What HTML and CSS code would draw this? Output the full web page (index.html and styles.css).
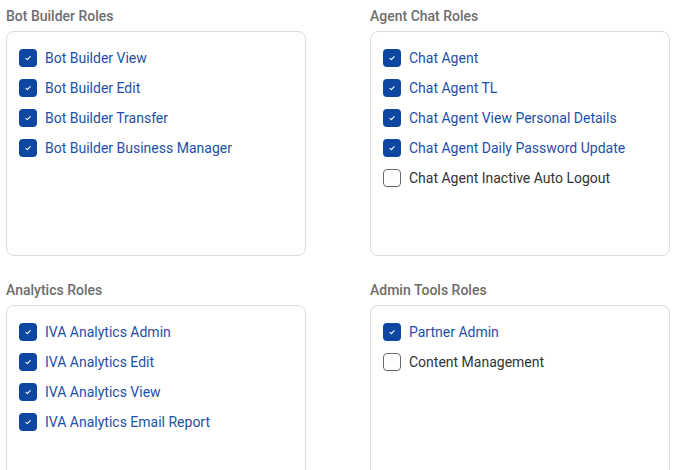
FILE: index.html
```html
<!DOCTYPE html>
<html>
<head>
<meta charset="utf-8">
<link rel="stylesheet" href="styles.css">
</head>
<body>
<div class="grid">
  <section class="group">
    <h3 class="title">Bot Builder Roles</h3>
    <div class="box">
      <label class="row on"><span class="cb"><svg viewBox="0 0 18 18"><path d="M7 9.3l1.4 1.3 2.8-3"/></svg></span>Bot Builder View</label>
      <label class="row on"><span class="cb"><svg viewBox="0 0 18 18"><path d="M7 9.3l1.4 1.3 2.8-3"/></svg></span>Bot Builder Edit</label>
      <label class="row on"><span class="cb"><svg viewBox="0 0 18 18"><path d="M7 9.3l1.4 1.3 2.8-3"/></svg></span>Bot Builder Transfer</label>
      <label class="row on"><span class="cb"><svg viewBox="0 0 18 18"><path d="M7 9.3l1.4 1.3 2.8-3"/></svg></span>Bot Builder Business Manager</label>
    </div>
  </section>
  <section class="group">
    <h3 class="title">Agent Chat Roles</h3>
    <div class="box">
      <label class="row on"><span class="cb"><svg viewBox="0 0 18 18"><path d="M7 9.3l1.4 1.3 2.8-3"/></svg></span>Chat Agent</label>
      <label class="row on"><span class="cb"><svg viewBox="0 0 18 18"><path d="M7 9.3l1.4 1.3 2.8-3"/></svg></span>Chat Agent TL</label>
      <label class="row on"><span class="cb"><svg viewBox="0 0 18 18"><path d="M7 9.3l1.4 1.3 2.8-3"/></svg></span>Chat Agent View Personal Details</label>
      <label class="row on"><span class="cb"><svg viewBox="0 0 18 18"><path d="M7 9.3l1.4 1.3 2.8-3"/></svg></span>Chat Agent Daily Password Update</label>
      <label class="row off"><span class="cb"></span>Chat Agent Inactive Auto Logout</label>
    </div>
  </section>
  <section class="group">
    <h3 class="title">Analytics Roles</h3>
    <div class="box">
      <label class="row on"><span class="cb"><svg viewBox="0 0 18 18"><path d="M7 9.3l1.4 1.3 2.8-3"/></svg></span>IVA Analytics Admin</label>
      <label class="row on"><span class="cb"><svg viewBox="0 0 18 18"><path d="M7 9.3l1.4 1.3 2.8-3"/></svg></span>IVA Analytics Edit</label>
      <label class="row on"><span class="cb"><svg viewBox="0 0 18 18"><path d="M7 9.3l1.4 1.3 2.8-3"/></svg></span>IVA Analytics View</label>
      <label class="row on"><span class="cb"><svg viewBox="0 0 18 18"><path d="M7 9.3l1.4 1.3 2.8-3"/></svg></span>IVA Analytics Email Report</label>
    </div>
  </section>
  <section class="group">
    <h3 class="title">Admin Tools Roles</h3>
    <div class="box">
      <label class="row on"><span class="cb"><svg viewBox="0 0 18 18"><path d="M7 9.3l1.4 1.3 2.8-3"/></svg></span>Partner Admin</label>
      <label class="row off"><span class="cb"></span>Content Management</label>
    </div>
  </section>
</div>
</body>
</html>
```
FILE: styles.css
```css
html, body {
  margin: 0;
  background: #ffffff;
}
body {
  padding: 6px 0 0 6px;
  font-family: Roboto, "Liberation Sans", sans-serif;
}
.grid {
  display: grid;
  grid-template-columns: 300px 300px;
  column-gap: 64px;
  row-gap: 24px;
}
.title {
  margin: 0 0 5px 0;
  font-size: 14px;
  line-height: 20px;
  font-weight: 500;
  color: #6e6e6e;
}
.box {
  box-sizing: border-box;
  height: 225px;
  border: 1px solid #dcdcdc;
  border-radius: 8px;
  padding: 11px 12px 13px;
  display: flex;
  flex-direction: column;
}
.row {
  display: flex;
  align-items: center;
  height: 30px;
  gap: 8px;
  font-size: 14px;
  color: #1d4fa8;
}
.row.off {
  color: #333333;
}
.cb {
  box-sizing: border-box;
  width: 18px;
  height: 18px;
  border-radius: 4px;
  flex: none;
  display: flex;
}
.on .cb {
  background: #0d47a1;
}
.off .cb {
  border: 1.5px solid #6b6b6b;
}
.cb svg {
  width: 18px;
  height: 18px;
}
.cb path {
  fill: none;
  stroke: #ffffff;
  stroke-width: 1.1;
  stroke-linecap: round;
  stroke-linejoin: round;
}
```
